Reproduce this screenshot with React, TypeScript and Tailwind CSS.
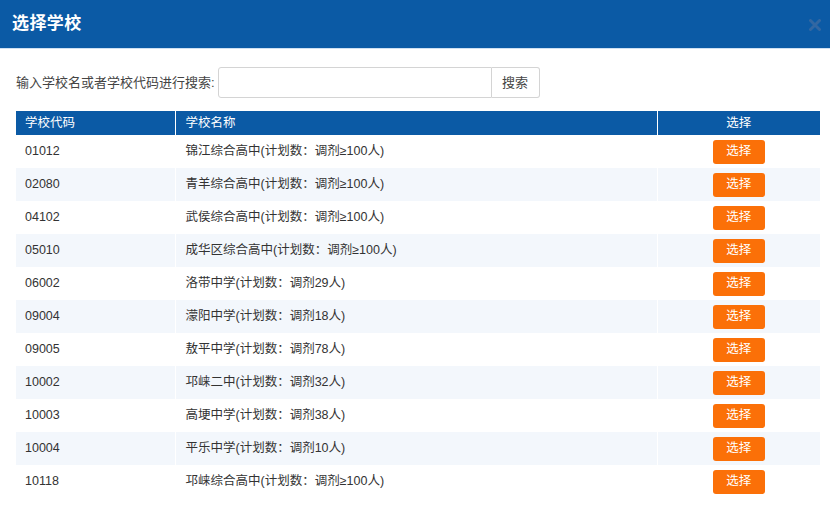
import React from 'react';

type School = { code: string; name: string };

const schools: School[] = [
  { code: '01012', name: '锦江综合高中(计划数：调剂≥100人)' },
  { code: '02080', name: '青羊综合高中(计划数：调剂≥100人)' },
  { code: '04102', name: '武侯综合高中(计划数：调剂≥100人)' },
  { code: '05010', name: '成华区综合高中(计划数：调剂≥100人)' },
  { code: '06002', name: '洛带中学(计划数：调剂29人)' },
  { code: '09004', name: '濛阳中学(计划数：调剂18人)' },
  { code: '09005', name: '敖平中学(计划数：调剂78人)' },
  { code: '10002', name: '邛崃二中(计划数：调剂32人)' },
  { code: '10003', name: '高埂中学(计划数：调剂38人)' },
  { code: '10004', name: '平乐中学(计划数：调剂10人)' },
  { code: '10118', name: '邛崃综合高中(计划数：调剂≥100人)' },
];

const font = { fontFamily: '"Liberation Sans", "Noto Sans CJK SC", sans-serif' };

export default function App() {
  return (
    <div className="w-[830px] h-[514px] bg-white overflow-hidden text-[#333]" style={font}>
      <div className="h-[49px] bg-[#0b5aa5] border-b border-[#cfe0f2] flex items-center justify-between pl-3 pr-[9px]">
        <h1 className="text-white text-[17px] font-bold tracking-wide">选择学校</h1>
        <svg width="12" height="12" viewBox="0 0 12 12" className="mt-[1px]">
          <path d="M1.5 1.5 L10.5 10.5 M10.5 1.5 L1.5 10.5" stroke="#3267a2" strokeWidth="3" strokeLinecap="round" />
        </svg>
      </div>

      <div className="flex items-center pl-4 pt-[18px]">
        <label className="text-[13px] text-[#444] mr-[3px]">输入学校名或者学校代码进行搜索:</label>
        <input className="w-[274px] h-[31px] border border-[#d4d4d4] rounded-l-[3px] outline-none" />
        <button className="h-[31px] w-[48px] border border-l-0 border-[#d4d4d4] rounded-r-[3px] text-[13px] text-[#444] bg-white">
          搜索
        </button>
      </div>

      <table className="mt-[13px] ml-4 w-[804px] border-collapse text-[12.5px]">
        <thead>
          <tr className="h-[24px] bg-[#0b5aa5] text-white">
            <th className="w-[159px] text-left font-normal pl-[9px] border-r border-white">学校代码</th>
            <th className="w-[482px] text-left font-normal pl-[10px] border-r border-white">学校名称</th>
            <th className="font-normal text-center">选择</th>
          </tr>
        </thead>
        <tbody>
          {schools.map((s, i) => (
            <tr key={s.code} className={`h-[33px] ${i % 2 === 1 ? 'bg-[#f3f7fc]' : 'bg-white'}`}>
              <td className="pl-[9px] border-r border-white">{s.code}</td>
              <td className="pl-[10px] border-r border-white">{s.name}</td>
              <td className="text-center">
                <button className="w-[52px] h-[24px] rounded-[3px] bg-[#fb7008] text-white text-[12.5px] align-middle">
                  选择
                </button>
              </td>
            </tr>
          ))}
        </tbody>
      </table>
    </div>
  );
}
